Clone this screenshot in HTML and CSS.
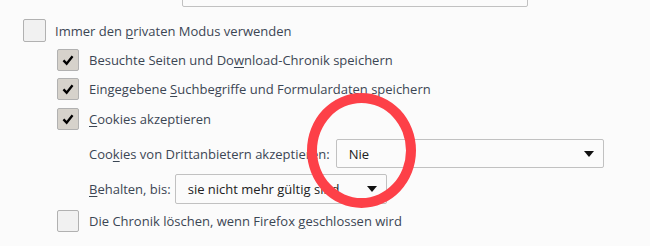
FILE: index.html
```html
<!DOCTYPE html>
<html>
<head>
    <title>Datenschutz</title>
    <link rel="stylesheet" href="styles.css">
</head>
<body>
    <div class="history-select"></div>

    <div class="prefs">
        <div class="row row-top">
            <span class="check"></span>
            <span>Immer den <u>p</u>rivaten Modus verwenden</span>
        </div>
        <div class="row sub">
            <span class="check on"><svg viewBox="0 0 22 22"><path d="M6 11.5l3.5 3.5 6.5-8" /></svg></span>
            <span>Besuchte Seiten und Do<u>w</u>nload-Chronik speichern</span>
        </div>
        <div class="row sub">
            <span class="check on"><svg viewBox="0 0 22 22"><path d="M6 11.5l3.5 3.5 6.5-8" /></svg></span>
            <span>Eingegebene <u>S</u>uchbegriffe und Formulardaten speichern</span>
        </div>
        <div class="row sub row-cookies">
            <span class="check on"><svg viewBox="0 0 22 22"><path d="M6 11.5l3.5 3.5 6.5-8" /></svg></span>
            <span><u>C</u>ookies akzeptieren</span>
        </div>
        <div class="row field row-third">
            <span>Coo<u>k</u>ies von Drittanbietern akzeptieren:</span>
            <div class="select wide"><span>Nie</span><i class="arrow"></i></div>
        </div>
        <div class="row field row-keep">
            <span><u>B</u>ehalten, bis:</span>
            <div class="select narrow"><span>sie nicht mehr gültig sind</span><i class="arrow"></i></div>
        </div>
        <div class="row sub row-last">
            <span class="check"></span>
            <span>Die Chronik löschen, wenn Firefox <u>g</u>eschlossen wird</span>
        </div>
    </div>

    <div class="highlight"></div>
</body>
</html>
```
FILE: styles.css
```css
body { margin: 0; background: #fbfbfb; color: #3b4654; font-family: "Open Sans", sans-serif; font-size: 13px; position: relative; height: 246px; overflow: hidden; }
u { text-decoration-thickness: 1px; text-underline-offset: 2px; }

.history-select { margin: -24px 0 0 182px; width: 346px; height: 31px; box-sizing: border-box; border: 1px solid #c1c1c1; border-radius: 2px; background: #fbfbfb; }

.prefs { display: flex; flex-direction: column; margin-top: 9px; }
.row { display: flex; align-items: center; height: 29px; }
.row-top { padding-left: 23px; }
.sub { padding-left: 57px; }
.row-cookies { height: 32px; }
.field { padding-left: 89px; }
.row-third { height: 37px; }
.row-keep { height: 33px; }
.row-last { height: 32px; }

.check { width: 22px; height: 22px; box-sizing: border-box; border: 1px solid #b1b1b1; border-radius: 2px; background: #f1f1f1; margin-right: 10px; flex: none; display: flex; }
.row-top .check { width: 23px; height: 23px; margin-right: 9px; }
.check.on { background: #d6d2cb; }
.check svg { width: 20px; height: 20px; }
.check path { fill: none; stroke: #000; stroke-width: 2.6; }

.select { height: 29px; box-sizing: border-box; border: 1px solid #c1c1c1; border-radius: 2px; background: #fbfbfb; display: flex; align-items: center; padding: 0 9px 0 12px; color: #222; }
.select span { flex: 1; white-space: nowrap; }
.select.wide { width: 268px; margin-left: 6px; }
.select.narrow { width: 212px; height: 30px; margin-left: 4px; }
.arrow { width: 0; height: 0; border-left: 5px solid transparent; border-right: 5px solid transparent; border-top: 6px solid #111; }

.highlight { position: absolute; left: 307px; top: 93px; width: 109px; height: 115px; box-sizing: border-box; border: 10px solid #fd4048; border-radius: 50%; }
```
